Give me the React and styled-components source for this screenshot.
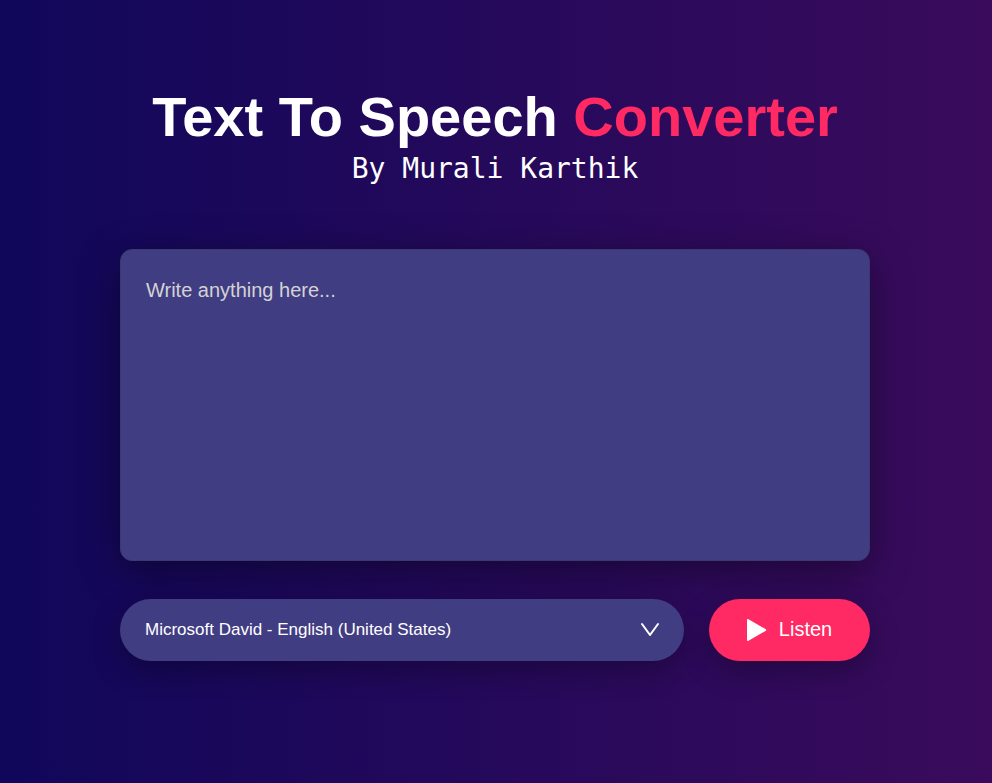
import React from "react";
import styled, { createGlobalStyle } from "styled-components";

const GlobalStyle = createGlobalStyle`
  * {
    margin: 0;
    padding: 0;
    box-sizing: border-box;
    font-family: "Liberation Sans", Arial, sans-serif;
  }
`;

const Hero = styled.main`
  width: 100%;
  min-height: 100vh;
  padding: 0 122px 38px 120px;
  display: flex;
  flex-direction: column;
  align-items: center;
  justify-content: center;
  background: linear-gradient(90deg, #10075a, #3a0b5c);
  color: #fff;
`;

const Title = styled.h1`
  font-size: 56px;
  line-height: 64px;
  font-weight: 700;
  text-align: center;
`;

const Accent = styled.span`
  color: #ff2963;
`;

const Byline = styled.p`
  margin: 4px 0 64px;
  font-family: "DejaVu Sans Mono", monospace;
  font-size: 28px;
  line-height: 32px;
`;

const Form = styled.form`
  width: 100%;
  max-width: 750px;
`;

const TextBox = styled.textarea`
  display: block;
  width: 100%;
  height: 312px;
  padding: 26px 25px;
  border: 1px solid #3a3970;
  border-radius: 12px;
  outline: 0;
  resize: none;
  background: #413d83;
  color: #fff;
  font-size: 20px;
  line-height: 28px;
  box-shadow: 0 10px 40px rgba(0, 0, 0, 0.4);

  &::placeholder {
    color: #d3d3d3;
  }
`;

const Controls = styled.div`
  display: flex;
  gap: 25px;
  margin-top: 38px;
`;

const VoiceField = styled.div`
  flex: 1;
  display: grid;
  align-items: center;
  border-radius: 31px;
  background: #413d83;
  box-shadow: 0 10px 30px rgba(0, 0, 0, 0.3);

  > * {
    grid-area: 1 / 1;
  }

  svg {
    justify-self: end;
    margin-right: 24px;
    pointer-events: none;
  }
`;

const VoiceSelect = styled.select`
  width: 100%;
  height: 62px;
  padding: 0 56px 0 25px;
  border: 0;
  outline: 0;
  appearance: none;
  background: transparent;
  color: #fff;
  font-size: 17px;
`;

const ListenButton = styled.button`
  width: 161px;
  height: 62px;
  display: flex;
  align-items: center;
  justify-content: center;
  gap: 12px;
  border: 0;
  border-radius: 31px;
  background: #ff2963;
  color: #fff;
  font-size: 20px;
  box-shadow: 0 10px 30px rgba(0, 0, 0, 0.3);
`;

export default function App() {
  return (
    <>
      <GlobalStyle />
      <Hero>
        <Title>
          Text To Speech <Accent>Converter</Accent>
        </Title>
        <Byline>By Murali Karthik</Byline>
        <Form onSubmit={(event) => event.preventDefault()}>
          <TextBox aria-label="Text to speak" placeholder="Write anything here..." />
          <Controls>
            <VoiceField>
              <VoiceSelect aria-label="Voice">
                <option>Microsoft David - English (United States)</option>
              </VoiceSelect>
              <svg width="20" height="16" viewBox="0 0 20 16" fill="none" aria-hidden="true">
                <path d="M2 2L10 13L18 2" stroke="#fff" strokeWidth="2" strokeLinecap="round" strokeLinejoin="round" />
              </svg>
            </VoiceField>
            <ListenButton type="submit">
              <svg width="20" height="24" viewBox="0 0 20 24" fill="#fff" aria-hidden="true">
                <path d="M0 2Q0 0.5 1.5 1.2L18.5 11Q20 12 18.5 13L1.5 22.8Q0 23.5 0 22Z" />
              </svg>
              Listen
            </ListenButton>
          </Controls>
        </Form>
      </Hero>
    </>
  );
}
